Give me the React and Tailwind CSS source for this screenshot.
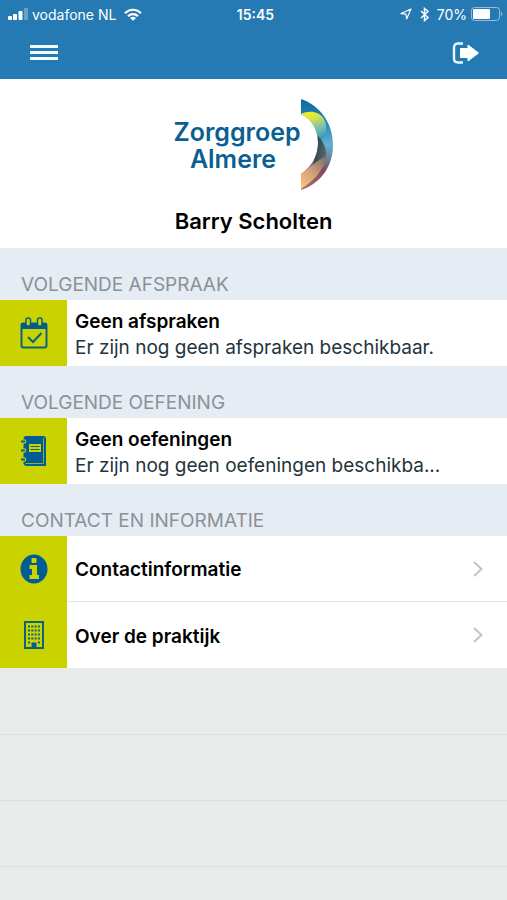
import React from 'react';

const SignalIcon = () => (
  <svg width="20" height="12" viewBox="0 0 20 12" fill="white" aria-hidden="true">
    <rect x="0" y="8" width="4" height="4" rx="1" />
    <rect x="5" y="6" width="4" height="6" rx="1" />
    <rect x="10.500" y="3" width="4" height="9" rx="1" />
    <rect x="16" y="0" width="4" height="12" rx="1" opacity="0.3" />
  </svg>
);

const WifiIcon = () => (
  <svg width="18" height="13" viewBox="0 0 18 13" fill="none" stroke="white" strokeWidth="2.2" aria-hidden="true">
    <path d="M1 5.2C5.4 0.6 12.6 0.6 17 5.2" />
    <path d="M4 8.2C6.8 5.4 11.2 5.4 14 8.2" />
    <path d="M9 12.8L6 9.9C7.8 8.4 10.2 8.4 12 9.9Z" fill="white" stroke="none" />
  </svg>
);

const LocationIcon = () => (
  <svg width="12" height="12" viewBox="0 0 12 12" fill="none" stroke="white" strokeWidth="1.1" strokeLinejoin="round" aria-hidden="true">
    <path d="M11 1L1 5.6L6 6.1L6.6 11Z" />
  </svg>
);

const BluetoothIcon = () => (
  <svg width="9" height="15" viewBox="0 0 9 15" fill="none" stroke="white" strokeWidth="1.5" aria-hidden="true">
    <path d="M1 4L8 10.5L4.5 13.5V1.5L8 4.5L1 11" />
  </svg>
);

const BatteryIcon = () => (
  <svg width="32" height="14" viewBox="0 0 32 14" aria-hidden="true">
    <rect x="0.5" y="0.5" width="28" height="13" rx="3" fill="none" stroke="white" strokeOpacity="0.5" />
    <rect x="2" y="2" width="17" height="10" rx="1" fill="white" />
    <path d="M30 4.5C31.6 5.4 31.6 8.6 30 9.5Z" fill="white" opacity="0.5" />
  </svg>
);

const MenuIcon = () => (
  <svg width="28" height="16" viewBox="0 0 28 16" fill="#f2fcff" aria-hidden="true">
    <rect y="0" width="28" height="3" />
    <rect y="6" width="28" height="3" />
    <rect y="12" width="28" height="3" />
  </svg>
);

const LogoutIcon = () => (
  <svg width="28" height="22" viewBox="0 0 28 22" aria-hidden="true">
    <path d="M11 1.5H6C3.500 1.5 2 3 2 5.5V16.5C2 19 3.500 20.5 6 20.5H11" fill="none" stroke="#e4f6ff" strokeWidth="2.4" />
    <path d="M8.500 6.500H16V3L26.500 11L16 19V15.500H8.500Z" fill="white" stroke="white" strokeLinejoin="round" />
  </svg>
);

const LogoArc = () => (
  <svg width="33" height="92" viewBox="0 0 33 92" aria-hidden="true">
    <defs>
      <clipPath id="crescent">
        <path d="M0 0C18 6 32 23 32 46C32 68 19 85 0 91V75C9 69 17 58 17 44C17 31 11 20 0 15Z" />
      </clipPath>
      <linearGradient id="base" x1="0" y1="0" x2="0" y2="1">
        <stop offset="0" stopColor="#0a6ba6" />
        <stop offset="0.25" stopColor="#2785b6" />
        <stop offset="0.5" stopColor="#62b1d3" />
        <stop offset="0.66" stopColor="#6b7f9b" />
        <stop offset="0.78" stopColor="#85475e" />
        <stop offset="1" stopColor="#a07674" />
      </linearGradient>
      <linearGradient id="yellow" x1="0" y1="0" x2="0.3" y2="1">
        <stop offset="0" stopColor="#f6f01c" />
        <stop offset="0.3" stopColor="#dde63c" />
        <stop offset="0.65" stopColor="#7fc3ae" />
        <stop offset="1" stopColor="#3c98b6" />
      </linearGradient>
      <linearGradient id="peach" x1="0.8" y1="0" x2="0" y2="1">
        <stop offset="0" stopColor="#88736c" />
        <stop offset="0.5" stopColor="#d3a27a" />
        <stop offset="1" stopColor="#ffc57b" />
      </linearGradient>
      <linearGradient id="olive" x1="0" y1="0" x2="1" y2="0.4">
        <stop offset="0" stopColor="#2d382f" />
        <stop offset="1" stopColor="#4e6971" />
      </linearGradient>
    </defs>
    <g clipPath="url(#crescent)">
      <rect width="33" height="92" fill="url(#base)" />
      <path d="M0 15C8 11 18 12 23 20C27 27 25 35 21 41L13 44Z" fill="url(#yellow)" />
      <path d="M17 37C23 43 26 51 25 58L12 68Z" fill="url(#olive)" />
      <path d="M25 57C24 70 13 82 0 90V72C9 70 16 61 25 57Z" fill="url(#peach)" />
    </g>
  </svg>
);

const CalendarIcon = () => (
  <svg width="28" height="32" viewBox="0 0 28 32" aria-hidden="true">
    <rect x="1.5" y="6.5" width="25" height="24" rx="2" fill="none" stroke="#0b6478" strokeWidth="2" />
    <path d="M1 6H27V12H1Z" fill="#005c94" />
    <rect x="6" y="1" width="4.500" height="8" rx="2" fill="#cad300" stroke="#0b6478" strokeWidth="1.5" />
    <rect x="17.500" y="1" width="4.500" height="8" rx="2" fill="#cad300" stroke="#0b6478" strokeWidth="1.5" />
    <path d="M8 20L13 25L21.500 16" fill="none" stroke="#0b6478" strokeWidth="2" />
  </svg>
);

const NotebookIcon = () => (
  <svg width="26" height="31" viewBox="0 0 26 31" aria-hidden="true">
    <path d="M5 0H22C24 0 25 1 25 3V30H6C4 30 2.500 29 2.500 27V3C2.500 1 3.500 0 5 0Z" fill="#005c94" />
    <path d="M4.500 27.500H22.500V2" fill="none" stroke="#8fae28" strokeWidth="1" />
    <rect x="8" y="8" width="12" height="8" fill="#cad300" />
    <path d="M9.500 10.500H18.500M9.500 13.500H18.500" stroke="#0b6478" strokeWidth="1.200" />
    <g fill="#cad300">
      <circle cx="3" cy="5.500" r="2.200" />
      <circle cx="3" cy="14.500" r="2.200" />
      <circle cx="3" cy="23.500" r="2.200" />
    </g>
    <path d="M0 5.500H4M0 14.500H4M0 23.500H4" stroke="#0b6478" strokeWidth="1.800" />
  </svg>
);

const InfoIcon = () => (
  <svg width="28" height="30" viewBox="0 0 28 30" aria-hidden="true">
    <ellipse cx="14" cy="15" rx="13.500" ry="14.500" fill="#005c94" />
    <rect x="11.500" y="4" width="5" height="5" rx="1" fill="#cad300" />
    <path d="M9.500 11H17V21H19V25H9.500V21H12V15H9.500Z" fill="#cad300" />
  </svg>
);

const BuildingIcon = () => (
  <svg width="20" height="28" viewBox="0 0 20 28" aria-hidden="true">
    <rect x="1" y="1" width="18" height="26" fill="none" stroke="#0b6478" strokeWidth="2" />
    <path d="M4 5.500H16M4 9.500H16M4 13.500H16M4 17.500H16" stroke="#0b6478" strokeWidth="2" strokeDasharray="2 1.300" />
    <path d="M4 21.500H6M14 21.500H16" stroke="#0b6478" strokeWidth="2" />
    <path d="M7.500 27V21.500H12.500V27Z" fill="#005c94" />
  </svg>
);

const ChevronIcon = () => (
  <svg width="10" height="16" viewBox="0 0 10 16" fill="none" stroke="#c4c4c6" strokeWidth="2" aria-hidden="true">
    <path d="M1 1L8.500 8L1 15" />
  </svg>
);

const IconTile = ({ children }) => (
  <span className="flex w-[67px] shrink-0 items-center justify-center self-stretch bg-[#cad300]">
    {children}
  </span>
);

const SectionTitle = ({ children }) => (
  <h2 className="flex h-[52px] items-end bg-[#e5ecf4] px-[21px] pb-[3px] text-[19px] leading-6 text-[#8d9196]">
    {children}
  </h2>
);

const InfoRow = ({ icon, title, text }) => (
  <div className="flex min-h-[66px] items-center bg-white">
    <IconTile>{icon}</IconTile>
    <div className="min-w-0 flex-1 px-2 pt-[3px]">
      <p className="text-[19px] font-semibold leading-[26px] text-black">{title}</p>
      <p className="text-[19px] leading-[26px] text-[#24343b]">{text}</p>
    </div>
  </div>
);

const LinkRow = ({ icon, title }) => (
  <li className="group">
    <a href="#" className="flex h-[66px] items-center bg-white">
      <IconTile>{icon}</IconTile>
      <span className="flex flex-1 items-center justify-between self-stretch border-b border-[#e6e8e8] pl-2 pr-6 text-[19px] font-semibold text-black group-last:border-b-0">
        <span className="pt-1">{title}</span>
        <ChevronIcon />
      </span>
    </a>
  </li>
);

const appointments = [
  { title: 'Geen afspraken', text: 'Er zijn nog geen afspraken beschikbaar.' },
];

const exercises = [
  { title: 'Geen oefeningen', text: 'Er zijn nog geen oefeningen beschikba...' },
];

const App = () => {
  return (
    <div className="min-h-screen bg-[#e9ebeb] font-['Inter',sans-serif]">
      <header className="bg-[#257ab3] text-white">
        <div className="grid h-7 grid-cols-[1fr_auto_1fr] items-center pl-2 pr-1 text-[14px]">
          <div className="flex items-center gap-1">
            <SignalIcon />
            <span>vodafone NL</span>
            <span className="pl-1"><WifiIcon /></span>
          </div>
          <span className="font-semibold">15:45</span>
          <div className="flex items-center justify-end gap-2">
            <LocationIcon />
            <BluetoothIcon />
            <span className="flex items-center gap-1">
              70%
              <BatteryIcon />
            </span>
          </div>
        </div>
        <nav className="flex h-[51px] items-center justify-between px-[27px] pb-[2px]">
          <button type="button" aria-label="Menu" className="px-[3px]">
            <MenuIcon />
          </button>
          <button type="button" aria-label="Uitloggen">
            <LogoutIcon />
          </button>
        </nav>
      </header>

      <main>
        <section className="flex h-[169px] flex-col items-center bg-white pt-5">
          <div className="flex">
            <div className="flex flex-col items-center pt-5 text-[25px] font-semibold leading-[27px] text-[#0b5f92]">
              <span>Zorggroep</span>
              <span className="pr-2">Almere</span>
            </div>
            <LogoArc />
          </div>
          <h1 className="pt-[14px] text-[22px] font-semibold leading-8 text-black">Barry Scholten</h1>
        </section>

        <SectionTitle>VOLGENDE AFSPRAAK</SectionTitle>
        {appointments.map((item) => (
          <InfoRow key={item.title} icon={<CalendarIcon />} title={item.title} text={item.text} />
        ))}

        <SectionTitle>VOLGENDE OEFENING</SectionTitle>
        {exercises.map((item) => (
          <InfoRow key={item.title} icon={<NotebookIcon />} title={item.title} text={item.text} />
        ))}

        <SectionTitle>CONTACT EN INFORMATIE</SectionTitle>
        <ul>
          <LinkRow icon={<InfoIcon />} title="Contactinformatie" />
          <LinkRow icon={<BuildingIcon />} title="Over de praktijk" />
        </ul>

        {/* empty list rows below the last item */}
        <div className="h-[66px]" />
        {[1, 2].map((row) => (
          <div key={row} className="h-[66px] border-t border-[#dcdfdf]" />
        ))}
        <div className="h-[34px] border-t border-[#dcdfdf]" />
      </main>
    </div>
  );
};

export default App;
